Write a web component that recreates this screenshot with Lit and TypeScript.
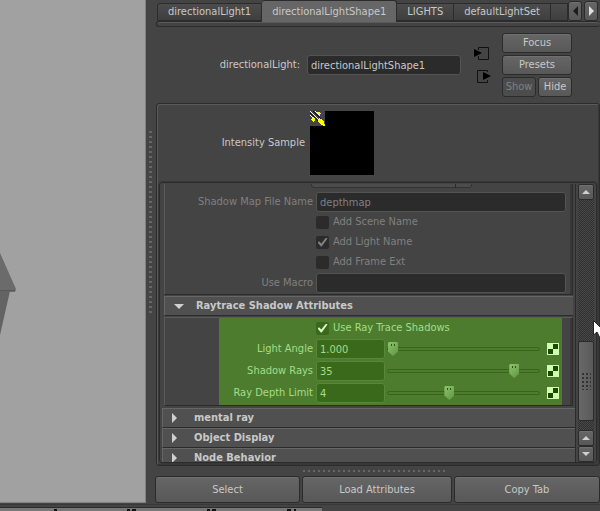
import { LitElement, html, css, svg } from "lit";
import { customElement, state } from "lit/decorators.js";
import { classMap } from "lit/directives/class-map.js";

const up = svg`<path d="M0 4 L4 0 L8 4 Z" fill="#cfcfcf"/>`;
const down = svg`<path d="M0 0 L4 4 L8 0 Z" fill="#cfcfcf"/>`;

const numericRows = [
  { id: "angle", label: "Light Angle", value: "1.000", position: 0 },
  { id: "rays", label: "Shadow Rays", value: "35", position: 86 },
  { id: "depth", label: "Ray Depth Limit", value: "4", position: 40 },
];

@customElement("app-root")
export class AppRoot extends LitElement {
  @state() private active = "directionalLightShape1";

  static styles = css`
    :host {
      display: flex;
      flex-direction: column;
      position: relative;
      height: 100vh;
      overflow: hidden;
      background: #444;
      color: #c8c8c8;
      font: 11px/14px "DejaVu Sans Condensed", "DejaVu Sans", sans-serif;
    }
    * { box-sizing: border-box; }
    button, input, select { font: inherit; color: inherit; margin: 0; padding: 0; }
    input, select { min-width: 0; }
    svg { display: block; }
    .workspace { flex: 1; display: flex; min-height: 0; border-bottom: 1px solid #383838; }
    .viewport {
      flex: 0 0 146px;
      margin-bottom: 1px;
      padding-top: 84px;
      background: #a1a1a1;
      border-right: 1px solid #7f8282;
      border-bottom: 1px solid #7f8282;
      display: flex;
      align-items: center;
    }
    .splitter { flex: 0 0 9px; display: flex; align-items: center; justify-content: center; }
    .grip-v {
      width: 3px;
      height: 184px;
      margin-bottom: 58px;
      background: repeating-linear-gradient(#666 0 2px, transparent 2px 5px);
    }
    .panel { flex: 1; min-width: 0; display: flex; flex-direction: column; }

    .tabs { flex: none; display: flex; height: 21px; padding-left: 2px; position: relative; z-index: 1; }
    .tab {
      flex: none;
      margin-top: 3px;
      padding: 0 10px;
      border: 1px solid #2b2b2b;
      border-left: 0;
      background: linear-gradient(#4c4c4c, #3f3f3f);
      white-space: nowrap;
    }
    .tab:first-child { border-left: 1px solid #2b2b2b; border-radius: 3px 0 0 0; }
    .tab.active {
      margin: 0 0 -1px;
      background: #666;
      border-bottom: 0;
      border-radius: 3px 3px 0 0;
    }
    .tab.cut { flex: 1; padding: 0; }
    .scrollers { flex: none; display: flex; gap: 2px; padding: 1px 2px 0 0; }
    .scrollers button { width: 14px; height: 20px; display: grid; place-items: center; }
    .tabline {
      flex: none;
      height: 6px;
      margin-left: 1px;
      border: 1px solid #2b2b2b;
      border-right-width: 0;
      border-radius: 3px;
      box-shadow: inset 0 1px #5a5a5a;
    }

    .btn, .scrollers button, .bar button, .footer button {
      border: 1px solid #2b2b2b;
      border-radius: 3px;
      background: linear-gradient(#666, #585858);
      box-shadow: inset 0 1px #707070;
    }
    .header { flex: none; display: flex; padding: 6px 28px 6px 0; align-items: center; }
    .header label { flex: 0 0 145px; text-align: right; }
    .field {
      height: 20px;
      border: 1px solid #535353;
      border-radius: 3px;
      background: #2b2b2b;
      padding: 0 3px;
    }
    .header .field { flex: 1; margin-left: 7px; }
    .links { display: grid; gap: 9px; padding: 0 11px 0 12px; }
    .actions { flex: 0 0 70px; display: grid; grid-template-columns: 1fr 1fr; gap: 2px; }
    .actions button { height: 20px; }
    .wide { grid-column: span 2; }
    .btn:disabled { background: #4c4c4c; box-shadow: none; color: #808080; }

    .frame {
      flex: 1;
      min-height: 0;
      display: flex;
      flex-direction: column;
      margin-left: 1px;
      padding: 6px 2px 2px;
      border: 1px solid #2b2b2b;
      border-radius: 3px;
      box-shadow: inset 1px 1px #5a5a5a, inset -1px -1px #383838;
    }
    .sample { flex: none; display: flex; align-items: center; height: 66px; margin-bottom: 6px; }
    .sample-name { flex: 0 0 146px; text-align: right; }
    .swatch { width: 64px; height: 64px; margin-left: 5px; background: #000; }

    .scroll {
      flex: 1;
      min-height: 0;
      display: flex;
      border: 1px solid #2b2b2b;
      outline: 1px solid #383838;
      border-radius: 3px;
      padding: 1px 0 0;
      overflow: hidden;
    }
    .content { flex: 1; min-width: 0; overflow: hidden; padding-left: 2px; border-right: 1px solid #2b2b2b; }
    .group { border: 1px solid #2b2b2b; border-top: 0; border-left: 1px solid #5a5a5a; margin: 0 2px 1px 2px; padding-bottom: 1px; box-shadow: inset -2px 0 #383838; }
    .row { display: grid; grid-template-columns: 148px 1fr; column-gap: 3px; align-items: center; padding-right: 6px; }
    .row > label { text-align: right; }
    .dim { color: #808080; }
    .menu-tail { height: 4px; display: flex; align-items: flex-end; overflow: hidden; margin: 0 0 4px 146px; width: 161px; position: relative; }
    .menu-tail select { appearance: none; width: 100%; height: 20px; flex: none; border: 1px solid #2b2b2b; border-radius: 3px; background: #505050; }
    .menu-tail::after { content: ""; position: absolute; right: 16px; top: 0; bottom: 0; width: 1px; background: #2b2b2b; }
    .check { height: 20px; display: grid; grid-template-columns: 13px 1fr; gap: 4px; align-items: center; }
    .check input {
      appearance: none;
      width: 13px;
      height: 13px;
      border-radius: 2px;
      background: #2b2b2b;
      display: grid;
      place-items: center;
    }
    .check input:checked::before {
      content: "";
      width: 10px;
      height: 9px;
      background: currentColor;
      clip-path: polygon(0 55%, 15% 42%, 38% 68%, 85% 0, 100% 10%, 42% 100%, 34% 100%);
    }
    .macro { margin-top: 1px; }

    .section {
      display: flex;
      align-items: center;
      width: 100%;
      height: 20px;
      border: 0;
      border-top: 1px solid #666;
      border-left: 1px solid #666;
      border-bottom: 1px solid #2b2b2b;
      background: #505050;
      padding: 0 0 0 9px;
      font-weight: bold;
      text-align: left;
    }
    .section svg { flex: 0 0 22px; }
    .section.open { margin: 0 2px; width: auto; min-width: calc(100% - 4px); }
    .ray { border-top: 1px solid #5a5a5a; margin: 1px 2px 2px; padding: 0 10px 0 54px; }
    .highlight { background: #4d7c2f; color: #a4dc88; padding: 0 2px 1px 0; }
    .highlight .row { grid-template-columns: 94px 1fr; padding: 0; height: 22px; }
    .highlight .check-row { height: 20px; }
    .highlight .check input, .highlight .field { background: #3b691b; border-color: #56873a; }
    .highlight .check input { color: #d6f7c3; }
    .numeric { display: flex; align-items: center; }
    .numeric .field { flex: 0 0 69px; }
    .numeric .slide {
      appearance: none;
      flex: 1;
      height: 16px;
      margin: 0 7px 0 2px;
      background: transparent;
    }
    .slide::-webkit-slider-runnable-track {
      height: 4px;
      border: 1px solid #39651b;
      border-radius: 2px;
      background: #4d7c2f;
    }
    .slide::-webkit-slider-thumb {
      appearance: none;
      width: 10px;
      height: 14px;
      margin-top: -6px;
      background:
        linear-gradient(#2c5610, #2c5610) 3px 2px / 1px 2px no-repeat,
        linear-gradient(#2c5610, #2c5610) 6px 2px / 1px 2px no-repeat,
        linear-gradient(135deg, #8fc46f, #5f9640);
      clip-path: polygon(10% 0, 90% 0, 100% 8%, 100% 68%, 50% 100%, 0 68%, 0 8%);
    }
    .map { flex: none; width: 12px; height: 12px; margin-right: 1px; border: 0; background: none; }

    .bar { flex: 0 0 20px; display: flex; flex-direction: column; padding: 0 2px 0 2px; }
    .bar button { flex: 0 0 16px; border-radius: 2px; display: grid; place-items: center; }
    .track {
      flex: 1;
      display: flex;
      flex-direction: column;
      justify-content: flex-end;
      padding-bottom: 9px;
      background: repeating-conic-gradient(#303030 0 25%, #484848 0 50%) 0 0 / 2px 2px;
    }
    .thumb {
      height: 36%;
      border: 1px solid #2b2b2b;
      border-radius: 2px;
      background: linear-gradient(90deg, #686868, #5a5a5a);
      display: grid;
      place-items: center;
    }
    .thumb::before {
      content: "";
      width: 10px;
      height: 18px;
      background: radial-gradient(#333 1px, transparent 1px) 0 0 / 4px 4px;
    }

    .grip-h {
      flex: none;
      align-self: center;
      width: 144px;
      height: 2px;
      margin: 4px 6px 4px 0;
      background: repeating-linear-gradient(90deg, #666 0 2px, transparent 2px 5px);
    }
    .footer { flex: none; display: grid; grid-template-columns: 145px 1fr 146px; gap: 2px; height: 27px; margin-bottom: 1px; }
    .clipped {
      width: 322px;
      height: 4px;
      margin-top: 2px;
      border-top: 1px solid #2b2b2b;
      background:
        linear-gradient(#111, #111) 54px 1px / 3px 2px no-repeat,
        linear-gradient(#111, #111) 127px 1px / 3px 2px no-repeat,
        linear-gradient(#111, #111) 132px 1px / 4px 2px no-repeat,
        linear-gradient(#111, #111) 207px 1px / 3px 2px no-repeat,
        linear-gradient(#111, #111) 212px 1px / 4px 2px no-repeat,
        linear-gradient(#111, #111) 287px 1px / 4px 2px no-repeat,
        linear-gradient(#111, #111) 294px 1px / 2px 2px no-repeat,
        #777;
    }
    .pointer { position: absolute; right: 0; top: 320px; }
  `;

  private tab(name: string) {
    const on = this.active === name;
    return html`<button role="tab" aria-selected=${on} class=${classMap({ tab: true, active: on })}
      @click=${() => (this.active = name)}>${name}</button>`;
  }

  private check(id: string, label: string, checked: boolean, dim: boolean) {
    return html`<div class="row check-row">
      <span></span>
      <div class=${classMap({ check: true, dim })}>
        <input type="checkbox" id=${id} .checked=${checked} ?disabled=${dim} />
        <label for=${id}>${label}</label>
      </div>
    </div>`;
  }

  render() {
    return html`
      <div class="workspace">
        <div class="viewport">
          <svg width="17" height="84" viewBox="0 0 17 84">
            <path d="M0 2 L16 38 L15 41 L0 41 Z" fill="#6b6b6b"/>
            <path d="M0 40 L10 40 L0 84 Z" fill="#636363"/>
            <path d="M0 39 H15 V40 H0 Z" fill="#585858"/>
          </svg>
        </div>
        <div class="splitter"><div class="grip-v"></div></div>
        <div class="panel">
          <div class="tabs" role="tablist">
            ${["directionalLight1", "directionalLightShape1", "LIGHTS", "defaultLightSet"].map((n) => this.tab(n))}
            <button class="tab cut" role="tab" aria-label="Next node"></button>
            <div class="scrollers">
              <button aria-label="Previous tabs"><svg width="5" height="10"><path d="M5 0 L0 5 L5 10 Z" fill="#1c1c1c"/></svg></button>
              <button aria-label="More tabs"><svg width="5" height="10"><path d="M0 0 L5 5 L0 10 Z" fill="#e0e0e0"/></svg></button>
            </div>
          </div>
          <div class="tabline"></div>

          <div class="header">
            <label for="node">directionalLight:</label>
            <input class="field" id="node" value="directionalLightShape1" />
            <div class="links">
              <svg width="18" height="14" viewBox="0 0 18 14">
                <path d="M5.5 3 V.5 H15.5 V12.5 H5.5 V9" fill="none" stroke="#111"/>
                <path d="M1 2 L9 6 L1 10 Z" fill="#000"/>
              </svg>
              <svg width="18" height="14" viewBox="0 0 18 14">
                <path d="M14.5 2 V.5 H4.5 V12.5 H14.5 V10" fill="none" stroke="#111"/>
                <path d="M10 2 L18 6 L10 10 Z" fill="#000"/>
              </svg>
            </div>
            <div class="actions">
              <button class="btn wide">Focus</button>
              <button class="btn wide">Presets</button>
              <button class="btn" disabled>Show</button>
              <button class="btn">Hide</button>
            </div>
          </div>

          <div class="frame">
            <div class="sample">
              <span class="sample-name">Intensity Sample</span>
              <div class="swatch">
                <svg width="15" height="15" viewBox="0 0 15 15" shape-rendering="crispEdges">
                  <path d="M0 0 H15 V15 H0 Z" fill="#444"/>
                  <path d="M6 2 L8 1 L11 2 L10 5 L8 4 Z M1 8 L3 6 L5 8 L5 10 L3 11 Z M7 9 L10 7 L14 11 L15 15 L11 14 Z" fill="#ff0"/>
                  <path d="M0 2 L8 10 M3 0 L11 8" stroke="#111"/>
                  <path d="M0 0 L9 9 M5 0 L9 4 M0 4 L4 8" stroke="#fff"/>
                </svg>
              </div>
            </div>

            <div class="scroll">
              <div class="content">
                <div class="group">
                  <div class="menu-tail"><select disabled aria-label="Shadow map mode"><option></option></select></div>
                  <div class="row dim">
                    <label for="map-file">Shadow Map File Name</label>
                    <input class="field" id="map-file" value="depthmap" disabled />
                  </div>
                  ${this.check("scene", "Add Scene Name", false, true)}
                  ${this.check("light", "Add Light Name", true, true)}
                  ${this.check("ext", "Add Frame Ext", false, true)}
                  <div class="row dim macro">
                    <label for="macro">Use Macro</label>
                    <input class="field" id="macro" disabled />
                  </div>
                </div>
                <button class="section open" aria-expanded="true">
                  <svg width="22" height="5" viewBox="0 0 22 5"><path d="M0 0 H10 L5 5 Z" fill="#d0d0d0"/></svg>
                  Raytrace Shadow Attributes
                </button>
                <div class="group ray">
                  <div class="highlight">
                    ${this.check("ray", "Use Ray Trace Shadows", true, false)}
                    ${numericRows.map((r) => html`<div class="row">
                      <label for=${r.id}>${r.label}</label>
                      <div class="numeric">
                        <input class="field" id=${r.id} .value=${r.value} />
                        <input class="slide" type="range" aria-label=${r.label} .value=${String(r.position)} />
                        <button class="map" aria-label="Map ${r.label}">
                          <svg width="12" height="12"><path d="M0 0 H12 V12 H0 Z" fill="#ceffac"/><path d="M6 1 H11 V6 H6 Z M1 6 H6 V11 H1 Z" fill="#194a00"/></svg>
                        </button>
                      </div>
                    </div>`)}
                  </div>
                </div>
                ${["mental ray", "Object Display", "Node Behavior"].map((n) => html`
                  <button class="section" aria-expanded="false">
                    <svg width="22" height="10" viewBox="0 0 22 10"><path d="M0 0 L5 5 L0 10 Z" fill="#d0d0d0"/></svg>
                    ${n}
                  </button>`)}
              </div>
              <div class="bar">
                <button aria-label="Scroll up"><svg width="8" height="4">${up}</svg></button>
                <div class="track"><div class="thumb"></div></div>
                <button aria-label="Scroll up"><svg width="8" height="4">${up}</svg></button>
                <button aria-label="Scroll down"><svg width="8" height="4">${down}</svg></button>
              </div>
            </div>
          </div>

          <div class="grip-h"></div>
          <div class="footer">
            <button>Select</button><button>Load Attributes</button><button>Copy Tab</button>
          </div>
        </div>
      </div>
      <div class="clipped"></div>
      <svg class="pointer" width="7" height="19" viewBox="0 0 7 19">
        <path d="M.5 .5 V15 L4 12 L7 18 H12 V12 Z" fill="#fff" stroke="#222"/>
      </svg>
    `;
  }
}
